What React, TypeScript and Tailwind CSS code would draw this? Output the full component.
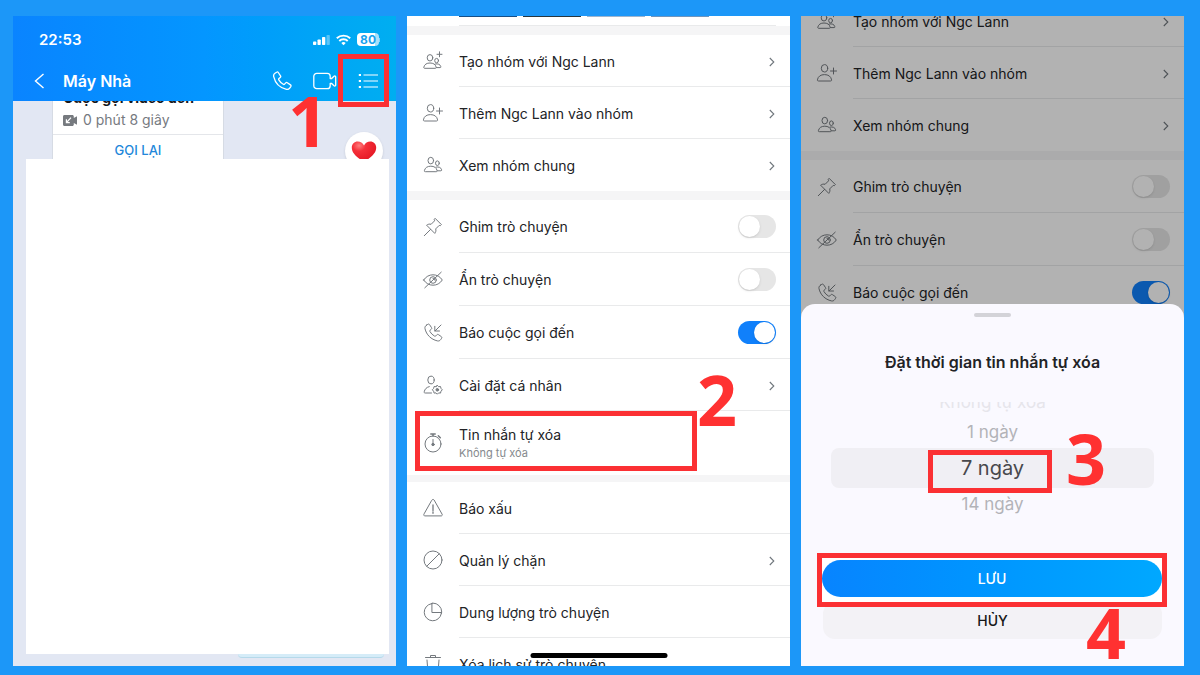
import type { ReactNode } from "react";

const icons: Record<string, ReactNode> = {
  groupAdd: (
    <>
      <ellipse cx="7" cy="6.8" rx="2.8" ry="3.2" />
      <path d="M1.6 17.3c-.7 0-1-.4-.8-1.1C1.500 13.300 3.800 12 7 12s5.500 1.300 6.200 4.200c.2.7-.1 1.100-.8 1.100z" />
      <ellipse cx="13.600" cy="9.600" rx="1.900" ry="2.200" />
      <path d="M12.200 13c2.900-.6 5 .4 5.600 2.600.2.600-.1 1-.700 1h-3.600" />
      <path d="M16.500.8v5M14 3.300h5" />
    </>
  ),
  userAdd: (
    <>
      <ellipse cx="7.500" cy="5.300" rx="3.200" ry="3.700" />
      <path d="M1.300 18c-.7 0-1-.4-.9-1.100C1 13.300 3.800 11.600 7.500 11.600s6.500 1.700 7.100 5.300c.1.700-.2 1.100-.9 1.100z" />
      <path d="M16.500 5v6M13.500 8h6" />
    </>
  ),
  group: (
    <>
      <ellipse cx="7.800" cy="5.600" rx="2.800" ry="3.300" />
      <path d="M2.200 16.700c-.7 0-1-.4-.8-1.100C2.100 12.600 4.500 11.200 7.800 11.200s5.700 1.400 6.300 4.400c.1.700-.2 1.100-.8 1.100z" />
      <ellipse cx="14.400" cy="8.200" rx="1.900" ry="2.300" />
      <path d="M13 12.100c2.900-.6 5 .4 5.600 2.600.2.700-.1 1.100-.7 1.100h-3.600" />
    </>
  ),
  pin: (
    <>
      <path d="M12.400 1.600l6 6-1.100 1.100-1.100-.3-3.500 3.500c.5 1.700.1 3.200-.9 4.500L3.600 8.200c1.300-1 2.900-1.400 4.500-.9l3.500-3.500-.3-1.100z" />
      <path d="M7.600 12.400l-6.300 6.300" />
    </>
  ),
  eyeOff: (
    <>
      <path d="M.7 10C3 6.500 6.200 4.800 10 4.800s7 1.700 9.300 5.200c-2.300 3.500-5.500 5.200-9.300 5.200S3 13.500.7 10z" />
      <circle cx="10" cy="10" r="3.300" />
      <path d="M10 8.400a1.600 1.600 0 011.600 1.600M1.800 17.800L18.200 2.200" />
    </>
  ),
  callIn: (
    <>
      <path d="M3.300 2.300l1.500-1c.6-.4 1.300-.3 1.700.3l2 3c.4.600.3 1.200-.3 1.700L7.100 7.200c-.4.400-.5.800-.2 1.300 1.100 1.900 2.600 3.400 4.600 4.600.5.300.9.200 1.300-.2l1-1.100c.4-.5 1-.6 1.600-.2l2.900 2c.6.400.7 1.100.3 1.700l-1 1.400c-.8 1.100-1.900 1.500-3.200 1.200C8 16.400 3.400 11.800 2 5.700c-.3-1.400.1-2.600 1.300-3.400z" />
      <path d="M18 2l-6 6M11.800 3.300V8h4.700" />
    </>
  ),
  userGear: (
    <>
      <ellipse cx="8" cy="5" rx="3.200" ry="3.900" />
      <path d="M8.500 18H2.200c-.8 0-1.200-.4-1-1.200.6-2.700 2.300-4.600 5.100-5.200" />
      <path d="M14.300 10.400l1.300 1.300 1.900-.2.500 1.900 1.300 1.400-1.300 1.400-.5 1.900-1.900-.2-1.300 1.300-1.300-1.300-1.900.2-.5-1.900-1.300-1.400 1.300-1.400.5-1.900 1.900.2z" />
      <circle cx="14.300" cy="14.800" r="1.300" fill="currentColor" />
    </>
  ),
  timer: (
    <>
      <circle cx="10" cy="11" r="8" />
      <path d="M7.800.9h4.400M10 1v2M15.300 2.700l2 2" strokeWidth="1.500" />
      <path d="M10 6.500v4" />
      <circle cx="10" cy="11.500" r="1.200" fill="currentColor" />
    </>
  ),
  warning: (
    <>
      <path d="M8.900 2c.5-.8 1.700-.8 2.200 0l8 14.200c.5.900 0 1.700-1 1.700H1.900c-1 0-1.500-.8-1-1.700z" />
      <path d="M10 7v5.500M10 14v1.300" strokeWidth="1.300" />
    </>
  ),
  block: (
    <>
      <circle cx="10" cy="10" r="9" />
      <path d="M3.700 16.300L16.300 3.700" />
    </>
  ),
  pie: (
    <>
      <path d="M8.300 1.700a8.600 8.600 0 1010 10" />
      <path d="M9.300 1.100h.5a8.900 8.900 0 018.900 8.900v.5H9.300zM8.300 1.700l1-.1M18.300 11.700l.2-1.200" />
    </>
  ),
  trash: <path d="M2.500 3.500h15M7.500 3.300V1.500h5v1.800M4 6l1 12.500h10L16 6" />,
};

const people = [
  { icon: "groupAdd", label: "Tạo nhóm với Ngc Lann" },
  { icon: "userAdd", label: "Thêm Ngc Lann vào nhóm" },
  { icon: "group", label: "Xem nhóm chung" },
];

const toggles = [
  { icon: "pin", label: "Ghim trò chuyện", on: false },
  { icon: "eyeOff", label: "Ẩn trò chuyện", on: false },
  { icon: "callIn", label: "Báo cuộc gọi đến", on: true },
];

function Icon({ name }: { name: string }) {
  return (
    <span className="flex w-[52px] shrink-0 items-center justify-center text-[#74797e]">
      <svg className="size-5 overflow-visible" viewBox="0 0 20 20" fill="none" stroke="currentColor" strokeWidth="1" strokeLinejoin="round" strokeLinecap="round">
        {icons[name]}
      </svg>
    </span>
  );
}

function Row({ icon, label, chevron = true, last = false }: { icon: string; label: string; chevron?: boolean; last?: boolean }) {
  return (
    <button type="button" className="flex h-[52px] w-full shrink-0 text-left">
      <Icon name={icon} />
      <span className={`flex h-full flex-1 items-center justify-between border-b pt-0.5 pr-[14px] ${last ? "border-transparent" : "border-[#e9eaeb]"}`}>
        {label}
        {chevron && (
          <svg className="h-3 w-2 text-[#6f767c]" viewBox="0 0 8 12" fill="none" stroke="currentColor" strokeWidth="1.1">
            <path d="M1.800 2L5.800 6l-4 4" />
          </svg>
        )}
      </span>
    </button>
  );
}

function ToggleRow({ icon, label, on }: { icon: string; label: string; on: boolean }) {
  return (
    <label className="flex h-[53px] shrink-0">
      <Icon name={icon} />
      <span className="flex h-full flex-1 items-center justify-between border-b border-[#e9eaeb] pt-px pr-[14px]">
        {label}
        <input
          type="checkbox"
          defaultChecked={on}
          className="h-[23px] w-[38px] appearance-none rounded-full bg-[#e6e6e6] p-px before:block before:size-[21px] before:rounded-full before:bg-white before:shadow-sm checked:bg-[#1080fb] checked:before:ml-[15px]"
        />
      </span>
    </label>
  );
}

function Divider({ thin = false }: { thin?: boolean }) {
  return <div className={`shrink-0 bg-[#f5f5f6] ${thin ? "h-[7px]" : "h-[9px]"}`} />;
}

function Step({ n, className }: { n: number; className: string }) {
  return (
    <span className={`absolute z-20 font-['Open_Sans',sans-serif] text-[70px] leading-[70px] font-bold text-[#ff3131] ${className}`}>
      {n}
    </span>
  );
}

function ChatPanel() {
  return (
    <section className="relative flex flex-col bg-[#e2e7f3]">
      <header className="z-10 flex h-[85px] shrink-0 flex-col bg-linear-to-r from-[#0a84ff] via-[#0496ff] to-[#00aef0] text-white">
        <div className="flex h-[45px] items-center justify-between pt-0.5 pr-4 pl-[26px]">
          <span className="text-[15px] font-semibold">22:53</span>
          <div className="flex items-center gap-1.5">
            <svg className="h-3 w-[17px]" viewBox="0 0 17 12" fill="currentColor">
              <rect x="0" y="7.500" width="3.300" height="3.500" rx=".8" />
              <rect x="4.500" y="5.500" width="3.300" height="5.500" rx=".8" />
              <rect x="9" y="3" width="3.300" height="8" rx=".8" />
              <rect x="13.500" y="1" width="3.300" height="10" rx=".8" opacity=".35" />
            </svg>
            <svg className="h-3 w-[15px]" viewBox="0 0 15 12" fill="none" stroke="currentColor" strokeWidth="1.900">
              <path d="M.8 4.300a9.600 9.600 0 0113.400 0M3.300 7a6 6 0 018.400 0" />
              <path d="M7.500 11.300L5.300 9.100a3.100 3.100 0 014.400 0z" fill="currentColor" stroke="none" />
            </svg>
            <span className="flex items-center">
              <span className="flex h-[13px] items-center rounded-sm bg-linear-to-r from-white from-80% to-[#a9e0fb] to-80% px-[3px] text-xs font-bold text-[#18a2ef]">
                80
              </span>
              <span className="h-1 w-px bg-white/50" />
            </span>
          </div>
        </div>
        <div className="flex h-10 items-center pr-[18px] pl-5">
          <button type="button" aria-label="Back">
            <svg className="h-4 w-3" viewBox="0 0 12 16" fill="none" stroke="currentColor" strokeWidth="1.400">
              <path d="M10.500 1L2.500 8l8 7" />
            </svg>
          </button>
          <h1 className="ml-[18px] flex-1 text-base font-semibold">Máy Nhà</h1>
          <div className="flex items-center gap-[21px]">
            <button type="button" aria-label="Call">
              <svg className="size-5" viewBox="0 0 20 20" fill="none" stroke="currentColor" strokeWidth="1.300">
                <path d="M3 2.200l1.600-1c.6-.4 1.300-.3 1.700.3l2.200 3.300c.4.600.3 1.200-.3 1.700L7 7.500c-.4.400-.5.800-.2 1.300 1.100 1.900 2.500 3.300 4.500 4.500.5.300.9.200 1.300-.2l1.100-1.200c.4-.5 1-.6 1.600-.2l3.200 2.200c.6.400.7 1.100.3 1.700l-1.100 1.500c-.8 1.100-1.900 1.500-3.200 1.200C8 16.900 3.200 12 1.700 5.600 1.400 4.200 1.800 3 3 2.200z" />
              </svg>
            </button>
            <button type="button" aria-label="Video call">
              <svg className="h-[18px] w-6" viewBox="0 0 24 18" fill="none" stroke="currentColor" strokeWidth="1.300" strokeLinejoin="round">
                <path d="M3.800 1.300h10.400a3 3 0 013 3V6.500h1.500l2.300-2.300c.7-.5 1.700-.2 1.700.8v8c0 1-1 1.300-1.700.8l-2.300-2.300h-1.500v2.200a3 3 0 01-3 3H3.800a3 3 0 01-3-3V4.300a3 3 0 013-3z" />
              </svg>
            </button>
            <button type="button" aria-label="Options">
              <svg className="h-4 w-5" viewBox="0 0 20 16" fill="none" stroke="currentColor" strokeWidth="1.100">
                <path d="M5.500 2H20M5.500 8H20M5.500 14H20" />
                <path d="M.8 2H3M.8 8H3M.8 14H3" strokeWidth="2.200" />
              </svg>
            </button>
          </div>
        </div>
      </header>
      <div className="flex h-[58px] shrink-0 items-start justify-between overflow-hidden pr-[13px] pl-[39px]">
        <div className="w-[172px] border-x border-[#d6dbe4] bg-white">
          <div className="-mt-[13px] px-[10px]">
            <p className="text-sm leading-5 font-bold whitespace-nowrap text-[#16181b]">Cuộc gọi video đến</p>
            <p className="flex items-center gap-1.5 text-sm leading-6 text-[#767a7f]">
              <svg className="h-[11px] w-3.5" viewBox="0 0 14 11" fill="currentColor">
                <path d="M1.500 0h7.800c.9 0 1.500.6 1.500 1.500v1.400L14 1.200v8.600l-3.200-1.700v1.400c0 .9-.6 1.500-1.500 1.500H1.500C.6 11 0 10.400 0 9.500v-8C0 .6.6 0 1.500 0z" />
                <path d="M8 2.700L3.500 7.500M3.400 4.300v3.400h3.400" fill="none" stroke="#fff" strokeWidth="1.200" />
              </svg>
              0 phút 8 giây
            </p>
          </div>
          <button type="button" className="mt-0.5 h-8 w-full border-t border-[#e4e6ea] text-[13px] font-medium text-[#2287da]">
            GỌI LẠI
          </button>
        </div>
        <span className="mt-[31px] flex size-[38px] items-center justify-center rounded-full bg-white shadow">
          <svg className="h-[23px] w-[26px]" viewBox="0 0 26 23">
            <defs>
              <radialGradient id="heart" cx=".3" cy=".2" r=".9">
                <stop offset="0" stopColor="#ff7d7d" />
                <stop offset=".3" stopColor="#f5303a" />
                <stop offset="1" stopColor="#e0121f" />
              </radialGradient>
            </defs>
            <path d="M13 22C7 18 .8 13.500.8 7.700.8 3.900 3.500 1.500 6.700 1.500c2.800 0 5 1.300 6.300 4 1.300-2.700 3.500-4 6.300-4 3.200 0 5.900 2.400 5.900 6.200C25.200 13.500 19 18 13 22z" fill="url(#heart)" />
          </svg>
        </span>
      </div>
      <div className="mr-[7px] ml-[13px] flex-1 bg-white" />
      <div className="flex h-3 shrink-0 justify-end pr-3">
        <div className="h-1 w-[146px] rounded-b-xl border-b border-[#b5d9ea] bg-[#d5ecf8]" />
      </div>
      <div className="absolute top-[38px] right-[7px] z-20 h-[53px] w-[51px] border-5 border-[#fb3033]" />
      <Step n={1} className="top-[69px] left-[275px]" />
    </section>
  );
}

function SettingsPanel() {
  return (
    <section className="relative flex flex-col bg-white">
      <div className="flex min-h-0 flex-1 flex-col overflow-hidden">
        <div className="mr-[14px] ml-[52px] flex h-[10px] shrink-0 items-start gap-1.5 border-b border-[#e9eaeb]">
          <span className="h-px w-[58px] bg-[#174f86]" />
          <span className="h-px w-[58px] bg-[#27363f]" />
          <span className="h-px w-[58px] bg-[#9db5cf]" />
          <span className="h-px w-[58px] bg-[#6f95bd]" />
        </div>
        <Divider />
        {people.map((p, i) => (
          <Row key={p.label} {...p} last={i === people.length - 1} />
        ))}
        <Divider />
        {toggles.map((t) => (
          <ToggleRow key={t.label} {...t} />
        ))}
        <Row icon="userGear" label="Cài đặt cá nhân" />
        <button type="button" className="relative flex h-16 shrink-0 text-left">
          <Icon name="timer" />
          <span className="flex h-full flex-col justify-center pb-px">
            <span className="leading-5">Tin nhắn tự xóa</span>
            <span className="text-[11px] leading-4 text-[#85898d]">Không tự xóa</span>
          </span>
          <span className="absolute top-0 right-[93px] left-2 h-[60px] border-5 border-[#fb3033]" />
        </button>
        <Divider thin />
        <Row icon="warning" label="Báo xấu" chevron={false} />
        <Row icon="block" label="Quản lý chặn" />
        <Row icon="pie" label="Dung lượng trò chuyện" chevron={false} />
        <Row icon="trash" label="Xóa lịch sử trò chuyện" chevron={false} last />
      </div>
      <div className="absolute bottom-2 left-1/2 h-[5px] w-[137px] -translate-x-1/2 rounded-full bg-black" />
      <Step n={2} className="top-[348px] left-[290px]" />
    </section>
  );
}

function TimerSheet() {
  return (
    <div className="absolute inset-x-0 bottom-0 rounded-t-[14px] bg-[#faf9ff] pb-[27px]">
      <div className="mx-auto mt-[9px] h-1 w-[37px] rounded-full bg-[#d3d3d8]" />
      <h2 className="mt-[33px] text-center text-base leading-6 font-semibold text-[#222326]">Đặt thời gian tin nhắn tự xóa</h2>
      <ul role="listbox" aria-label="Đặt thời gian tin nhắn tự xóa" className="mx-[30px] mt-7 text-center text-[17px] text-[#b3b3b8]">
        <li role="option" aria-selected="false" className="flex h-[10px] items-end justify-center overflow-hidden leading-5 text-[#e6e5eb]">
          Không tự xóa
        </li>
        <li role="option" aria-selected="false" className="pt-2 pb-1 leading-6">1 ngày</li>
        <li role="option" aria-selected="true" className="relative h-10 rounded-lg bg-[#f0eff4] text-xl leading-10 text-[#48484c]">
          7 ngày
          <span className="absolute top-0.5 right-[102px] left-[97px] h-[43px] border-5 border-[#fb3033]" />
          <Step n={3} className="-top-[25px] left-[235px]" />
        </li>
        <li role="option" aria-selected="false" className="pt-1 leading-6">14 ngày</li>
      </ul>
      <div className="relative z-10 mt-[37px] mr-[17px] ml-4 border-5 border-[#fb3033] bg-white pt-0.5 pb-[5px]">
        <button type="button" className="block h-[37px] w-full rounded-full bg-linear-to-r from-[#0884ff] to-[#00a8ff] text-sm font-medium text-white">
          LƯU
        </button>
      </div>
      <button type="button" className="-mt-[5px] ml-[22px] block h-[37px] w-[calc(100%-44px)] rounded-xl bg-[#f3f2f6] text-sm font-medium text-[#17181a]">
        HỦY
      </button>
      <Step n={4} className="right-[58px] -bottom-px" />
    </div>
  );
}

function TimerPanel() {
  return (
    <section className="relative overflow-hidden bg-white">
      <div className="-mt-[21px]">
        {people.map((p, i) => (
          <Row key={p.label} {...p} last={i === people.length - 1} />
        ))}
        <Divider />
        {toggles.map((t) => (
          <ToggleRow key={t.label} {...t} />
        ))}
      </div>
      <div className="absolute inset-0 bg-black/30" />
      <TimerSheet />
    </section>
  );
}

export default function App() {
  return (
    <main className="grid h-screen grid-cols-3 grid-rows-[minmax(0,1fr)] gap-[11px] overflow-hidden bg-[#1c97f8] pt-4 pr-4 pb-[9px] pl-[13px] font-['Inter',sans-serif] text-sm text-[#222326]">
      <ChatPanel />
      <SettingsPanel />
      <TimerPanel />
    </main>
  );
}
